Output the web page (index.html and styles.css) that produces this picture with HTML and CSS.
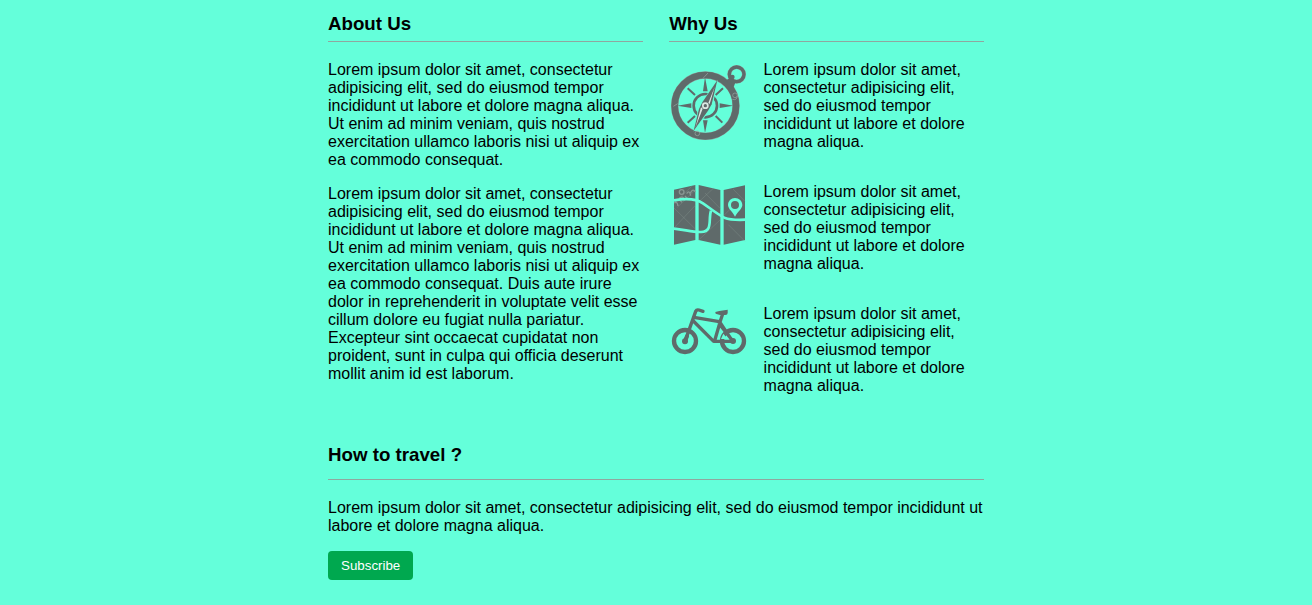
FILE: index.html
```html
<!DOCTYPE html>
<html lang="en">
<head>
<meta charset="utf-8">
<meta name="viewport" content="width=device-width, initial-scale=1">
<title>About Us</title>
<link rel="stylesheet" href="styles.css">
</head>
<body>
<main class="container">
  <div class="columns">
    <section class="panel">
      <h3 class="panel-title">About Us</h3>
      <div class="about-text">
        <p>Lorem ipsum dolor sit amet, consectetur adipisicing elit, sed do eiusmod tempor incididunt ut labore et dolore magna aliqua. Ut enim ad minim veniam, quis nostrud exercitation ullamco laboris nisi ut aliquip ex ea commodo consequat.</p>
        <p>Lorem ipsum dolor sit amet, consectetur adipisicing elit, sed do eiusmod tempor incididunt ut labore et dolore magna aliqua. Ut enim ad minim veniam, quis nostrud exercitation ullamco laboris nisi ut aliquip ex ea commodo consequat. Duis aute irure dolor in reprehenderit in voluptate velit esse cillum dolore eu fugiat nulla pariatur. Excepteur sint occaecat cupidatat non proident, sunt in culpa qui officia deserunt mollit anim id est laborum.</p>
      </div>
    </section>
    <section class="panel">
      <h3 class="panel-title">Why Us</h3>
      <div class="reasons">
        <div class="reason">
          <svg class="icon" width="80" height="82" viewBox="13 4 240 246" aria-hidden="true">
            <g fill="none" stroke="#8ea19c">
              <circle cx="122" cy="138" r="92" stroke-width="22"/>
              <circle cx="216" cy="44" r="22" stroke-width="12"/>
            </g>
            <g fill="none" stroke="#5f6a6a">
              <circle cx="122" cy="138" r="92" stroke-width="20"/>
              <circle cx="216" cy="44" r="22" stroke-width="10"/>
              <circle cx="122" cy="138" r="35" stroke-width="8"/>
            </g>
            <g fill="#5f6a6a">
              <path d="M183 62L198 55L212 69L206 84Z"/>
              <circle cx="203" cy="52" r="7"/>
              <path d="M121 52L129 95H115Z M121 220L129 182H115Z M38 138L80 131V145Z M206 138L165 131V145Z"/>
            </g>
            <path d="M69 86L91 106M175 86L153 106M69 189L91 169M173 189L153 169" stroke="#5f6a6a" stroke-width="6" fill="none"/>
            <path d="M159 60L145 134L134 153L87 216L100 148L112 125Z" fill="#66ffd6"/>
            <path d="M158 62L141 134L130 153L87 213L103 148L114 126Z" fill="#5f6a6a"/>
            <path d="M150 82L131 130L135 133Z M92 204L114 147L109 143Z" fill="#dce8e3"/>
            <circle cx="122" cy="138" r="10" fill="#dce8e3"/>
            <circle cx="122" cy="138" r="5" fill="#5f6a6a"/>
            <g fill="none" stroke="#9aa8a4" stroke-width="2">
              <circle cx="98" cy="221" r="7"/>
              <circle cx="211" cy="107" r="7"/>
              <path d="M203 119Q218 123 218 108M115 56L130 40M26 140L39 132"/>
            </g>
          </svg>
          <p>Lorem ipsum dolor sit amet, consectetur adipisicing elit, sed do eiusmod tempor incididunt ut labore et dolore magna aliqua.</p>
        </div>
        <div class="reason">
          <svg class="icon" width="80" height="70" viewBox="12 15 240 210" aria-hidden="true">
            <path d="M27 35L91 21V186L27 200Z M101 21L166 36V200L101 186Z M176 36L240 22V186L176 200Z" fill="#5f6a6a"/>
            <g fill="none" stroke="#899793" stroke-width="1">
              <path d="M27 150L91 82M101 72L145 31M101 186L166 125M120 45L166 92M190 140L240 190M27 90L91 153M176 113L205 84M28 75L80 25M37 88L91 36M204 33L240 70"/>
              <path d="M28 75Q36 68 39 84M41 64L51 73M43 61Q55 51 58 67M60 54L68 63M65 47Q73 34 77 53M76 45Q84 29 91 42" stroke-width="4"/>
              <circle cx="50" cy="42" r="7" stroke-width="4"/>
            </g>
            <g fill="none" stroke="#64ffda" stroke-width="8">
              <path d="M27 67C57 62 92 61 114 76C136 91 157 109 178 119C199 127 220 126 241 125"/>
              <path d="M27 152C59 155 83 163 108 162C145 161 129 124 138 98"/>
            </g>
            <path fill-rule="evenodd" d="M210 60C198 60 189 70 189 81C189 92 202 100 210 116C219 100 232 92 232 81C232 69 222 60 210 60ZM210 69A12 12 0 1 1 210 93A12 12 0 1 1 210 69Z" fill="#64ffda"/>
          </svg>
          <p>Lorem ipsum dolor sit amet, consectetur adipisicing elit, sed do eiusmod tempor incididunt ut labore et dolore magna aliqua.</p>
        </div>
        <div class="reason">
          <svg class="icon" width="80" height="52" viewBox="12 15 240 156" aria-hidden="true">
            <g fill="none" stroke="#5f6a6a" stroke-linecap="round" stroke-linejoin="round">
              <circle cx="60" cy="123" r="33" stroke-width="13"/>
              <circle cx="204" cy="123" r="33" stroke-width="13"/>
              <path d="M60 124L92 34Q95 28 102 30L114 34" stroke-width="10"/>
              <path d="M87 52L163 65M85 63L146 124H203L165 67L149 122M173 42L163 72L203 122" stroke-width="10"/>
              <path d="M60 124L66 109" stroke-width="12"/>
            </g>
            <path d="M151 36L163 33L188 29V39Q188 45 181 45H165L152 41Z" fill="#5f6a6a"/>
            <circle cx="60" cy="124" r="9" fill="#5f6a6a"/>
            <circle cx="204" cy="123" r="9" fill="#5f6a6a"/>
            <path d="M175 101L188 117H168Z" fill="#64ffda"/>
          </svg>
          <p>Lorem ipsum dolor sit amet, consectetur adipisicing elit, sed do eiusmod tempor incididunt ut labore et dolore magna aliqua.</p>
        </div>
      </div>
    </section>
  </div>
  <section class="travel">
    <h3 class="travel-title">How to travel ?</h3>
    <p class="travel-text">Lorem ipsum dolor sit amet, consectetur adipisicing elit, sed do eiusmod tempor incididunt ut labore et dolore magna aliqua.</p>
    <button class="subscribe" type="button">Subscribe</button>
  </section>
</main>
</body>
</html>
```
FILE: styles.css
```css
* {
  box-sizing: border-box;
}

body {
  margin: 0;
  background: #64ffda;
  color: #000;
  font-family: "Liberation Sans", Arial, sans-serif;
  font-size: 16px;
  line-height: 18px;
}

h3,
p {
  margin: 0;
}

.container {
  width: 50%;
  margin: 0 auto;
  padding: 13px 0 25px;
}

.columns {
  display: grid;
  grid-template-columns: 48% 48%;
  justify-content: space-between;
}

.panel-title,
.travel-title {
  margin-bottom: 19px;
  border-bottom: 1px solid #8fa79f;
  line-height: 21px;
}

.panel-title {
  padding-bottom: 7px;
}

.about-text {
  display: grid;
  gap: 16px;
}

.reasons {
  display: grid;
  gap: 32px;
}

.reason {
  display: grid;
  grid-template-columns: 30% 70%;
  align-items: start;
}

.icon {
  display: block;
}

.travel {
  margin-top: 49px;
}

.travel-title {
  padding-bottom: 14px;
}

.travel-text {
  margin-bottom: 16px;
}

.subscribe {
  padding: 7px 13px;
  border: 0;
  border-radius: 4px;
  background: #00a84f;
  color: #fff;
  font-family: inherit;
  line-height: 15px;
  cursor: pointer;
}
```
